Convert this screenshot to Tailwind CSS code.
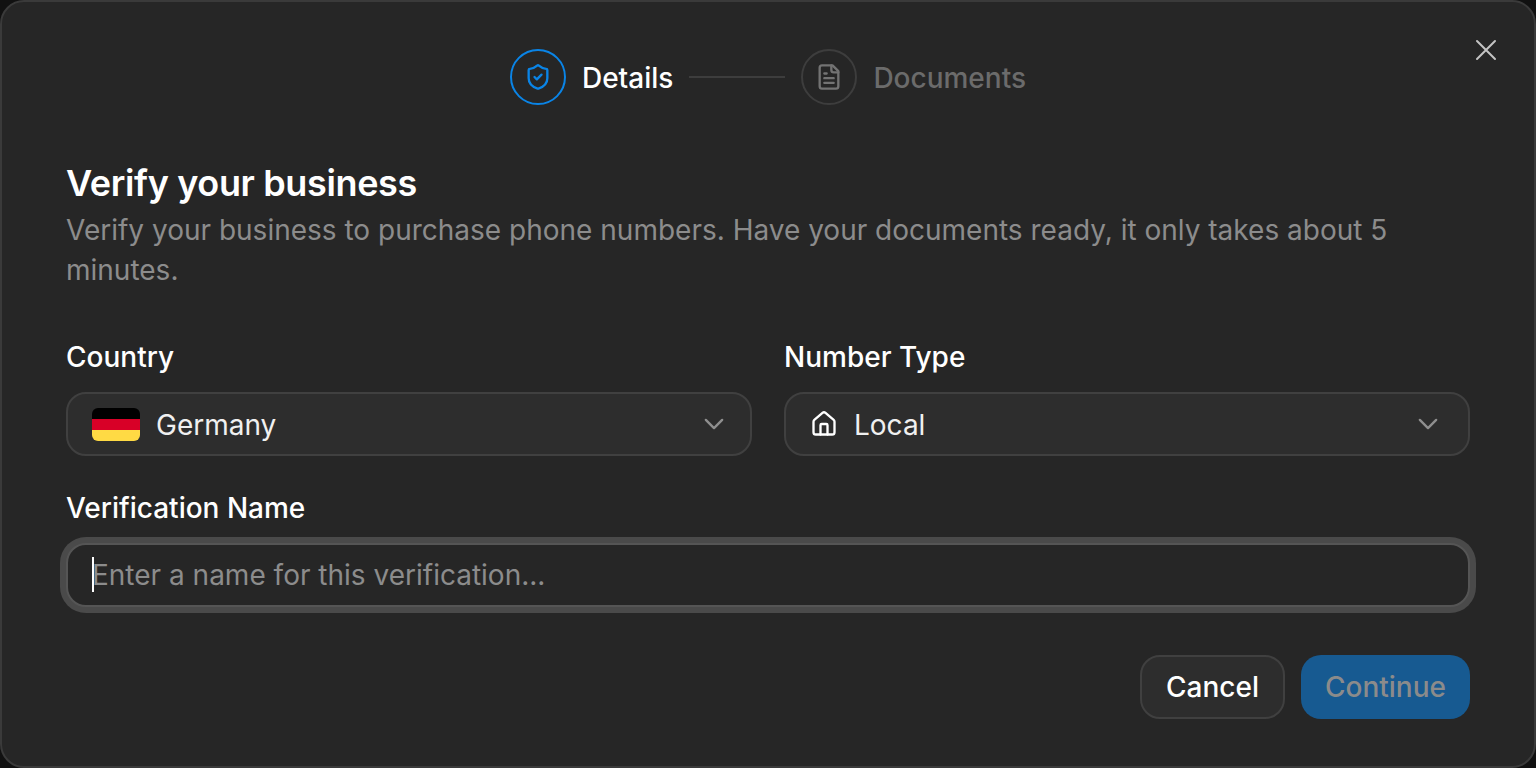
<!DOCTYPE html>
<html lang="en">
<head>
    <meta charset="UTF-8">
    <meta name="viewport" content="width=device-width, initial-scale=1.0">
    <title>Verify your business</title>
    <script src="https://cdn.jsdelivr.net/npm/@tailwindcss/browser@4"></script>
</head>
<body class="bg-[#111111] font-['Inter',sans-serif]">
    <div class="relative h-[768px] w-[1536px] overflow-hidden rounded-[24px] border-2 border-[#3a3a3a] bg-[#262626] px-[64px] pt-[47px]">
        <!-- close -->
        <button class="absolute right-[34px] top-[34px] text-[#c4c4c4]">
            <svg class="h-[28px] w-[28px]" viewBox="0 0 28 28" fill="none" stroke="currentColor" stroke-width="2" stroke-linecap="round"><path d="M5 5l18 18M23 5L5 23"/></svg>
        </button>

        <!-- stepper -->
        <div class="flex h-[56px] items-center justify-center">
            <div class="flex h-[56px] w-[56px] items-center justify-center rounded-full border-2 border-[#0a84e6] text-[#0a84e6]">
                <svg class="h-[28px] w-[28px]" viewBox="0 0 24 24" fill="none" stroke="currentColor" stroke-width="2" stroke-linecap="round" stroke-linejoin="round">
                    <path d="M20 13c0 5-3.5 7.5-7.66 8.95a1 1 0 0 1-.67-.01C7.5 20.5 4 18 4 13V6a1 1 0 0 1 1-1c2 0 4.500-1.200 6.240-2.720a1.170 1.170 0 0 1 1.520 0C14.510 3.810 17 5 19 5a1 1 0 0 1 1 1z"/>
                    <path d="M9 12l2 2 4-4"/>
                </svg>
            </div>
            <span class="ml-[16px] pt-[2px] text-[28px] font-medium leading-[40px] text-white">Details</span>
            <div class="mx-[16px] h-[2px] w-[96px] bg-[#3d3d3d]"></div>
            <div class="flex h-[56px] w-[56px] items-center justify-center rounded-full border-2 border-[#3d3d3d] text-[#737373]">
                <svg class="h-[28px] w-[28px]" viewBox="0 0 24 24" fill="none" stroke="currentColor" stroke-width="2" stroke-linecap="round" stroke-linejoin="round">
                    <path d="M15 2H6a2 2 0 0 0-2 2v16a2 2 0 0 0 2 2h12a2 2 0 0 0 2-2V7z"/>
                    <path d="M14 2v4a2 2 0 0 0 2 2h4"/>
                    <path d="M8 13h8M8 17h8M8 9h2"/>
                </svg>
            </div>
            <span class="ml-[16px] pt-[2px] text-[28px] font-medium leading-[40px] text-[#6b6b6b]">Documents</span>
        </div>

        <!-- heading -->
        <h1 class="mt-[58px] text-[36px] font-semibold leading-[40px] tracking-[-0.36px] text-white">Verify your business</h1>
        <p class="mt-[7px] text-[28px] leading-[40px] text-[#8c8c8c]">Verify your business to purchase phone numbers. Have your documents ready, it only takes about 5 minutes.</p>

        <!-- selects -->
        <div class="mt-[47px] grid grid-cols-2 gap-[32px]">
            <div>
                <label class="block text-[28px] font-medium leading-[40px] text-white">Country</label>
                <div class="mt-[15px] flex h-[64px] items-center rounded-[20px] border-2 border-[#404040] bg-[#2d2d2d] pl-[24px] pr-[22px]">
                    <svg class="h-[33px] w-[48px]" viewBox="0 0 48 33">
                        <defs><clipPath id="flag"><rect width="48" height="33" rx="6"/></clipPath></defs>
                        <g clip-path="url(#flag)">
                            <rect width="48" height="11" fill="#000000"/>
                            <rect y="11" width="48" height="11" fill="#d80027"/>
                            <rect y="22" width="48" height="11" fill="#ffda44"/>
                        </g>
                    </svg>
                    <span class="ml-[16px] flex-1 pt-[2px] text-[28px] leading-[40px] text-[#f0f0f0]">Germany</span>
                    <svg class="h-[28px] w-[28px] text-[#8f8f8f]" viewBox="0 0 24 24" fill="none" stroke="currentColor" stroke-width="2" stroke-linecap="round" stroke-linejoin="round"><path d="M5 8.500l7 7 7-7"/></svg>
                </div>
            </div>
            <div>
                <label class="block text-[28px] font-medium leading-[40px] text-white">Number Type</label>
                <div class="mt-[15px] flex h-[64px] items-center rounded-[20px] border-2 border-[#404040] bg-[#2d2d2d] pl-[24px] pr-[26px]">
                    <svg class="h-[28px] w-[28px] text-white" viewBox="0 0 24 24" fill="none" stroke="currentColor" stroke-width="2" stroke-linecap="round" stroke-linejoin="round">
                        <path d="M15 21v-8a1 1 0 0 0-1-1h-4a1 1 0 0 0-1 1v8"/>
                        <path d="M3 10a2 2 0 0 1 .71-1.530l7-6a2 2 0 0 1 2.580 0l7 6A2 2 0 0 1 21 10v9a2 2 0 0 1-2 2H5a2 2 0 0 1-2-2z"/>
                    </svg>
                    <span class="ml-[16px] flex-1 pt-[2px] text-[28px] leading-[40px] text-[#f0f0f0]">Local</span>
                    <svg class="h-[28px] w-[28px] text-[#8f8f8f]" viewBox="0 0 24 24" fill="none" stroke="currentColor" stroke-width="2" stroke-linecap="round" stroke-linejoin="round"><path d="M5 8.500l7 7 7-7"/></svg>
                </div>
            </div>
        </div>

        <!-- name -->
        <label class="mt-[32px] block text-[28px] font-medium leading-[40px] text-white">Verification Name</label>
        <div class="relative mt-[15px] flex h-[64px] items-center rounded-[20px] border-2 border-[#555555] bg-[#262626] pl-[24px] shadow-[0_0_0_6px_#4a4a4a]">
            <span class="absolute left-[24px] top-[12px] h-[35px] w-[2px] bg-white"></span>
            <span class="text-[28px] leading-[40px] text-[#8c8c8c]">Enter a name for this verification...</span>
        </div>

        <!-- actions -->
        <div class="mt-[48px] flex justify-end gap-[16px]">
            <button class="h-[64px] w-[145px] rounded-[20px] border-2 border-[#404040] bg-[#2d2d2d] text-[28px] font-medium text-white">Cancel</button>
            <button class="h-[64px] w-[169px] rounded-[20px] bg-[#175a91] text-[28px] font-medium text-[#8b8b8b]">Continue</button>
        </div>
    </div>
</body>
</html>
